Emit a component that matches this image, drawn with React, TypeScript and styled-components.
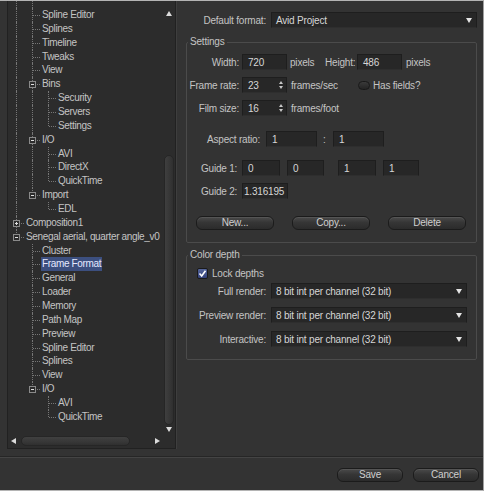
import React from 'react';
import styled, { createGlobalStyle, css } from 'styled-components';

type GuideKind = 'pipe' | 'tee' | 'elbow' | 'blank';
type Toggle = 'minus' | 'plus';

interface TreeNode {
  label: string;
  guides: GuideKind[];
  toggle?: Toggle;
  selected?: boolean;
}

const kinds: Record<string, GuideKind> = { '|': 'pipe', '+': 'tee', L: 'elbow', ' ': 'blank' };

const node = (label: string, pattern: string, toggle?: Toggle, selected?: boolean): TreeNode => ({
  label,
  guides: pattern.split('').map((c) => kinds[c]),
  toggle,
  selected,
});

const treeNodes: TreeNode[] = [
  node('Spline Editor', '|+'),
  node('Splines', '|+'),
  node('Timeline', '|+'),
  node('Tweaks', '|+'),
  node('View', '|+'),
  node('Bins', '|+', 'minus'),
  node('Security', '||+'),
  node('Servers', '||+'),
  node('Settings', '||L'),
  node('I/O', '|+', 'minus'),
  node('AVI', '||+'),
  node('DirectX', '||+'),
  node('QuickTime', '||L'),
  node('Import', '|L', 'minus'),
  node('EDL', '| L'),
  node('Composition1', '+', 'plus'),
  node('Senegal aerial, quarter angle_v0', 'L', 'minus'),
  node('Cluster', ' +'),
  node('Frame Format', ' +', undefined, true),
  node('General', ' +'),
  node('Loader', ' +'),
  node('Memory', ' +'),
  node('Path Map', ' +'),
  node('Preview', ' +'),
  node('Spline Editor', ' +'),
  node('Splines', ' +'),
  node('View', ' +'),
  node('I/O', ' L', 'minus'),
  node('AVI', '  +'),
  node('QuickTime', '  L'),
];

const depthOptions = ['Full render:', 'Preview render:', 'Interactive:'];

const GlobalStyle = createGlobalStyle`
  html, body {
    margin: 0;
    padding: 0;
    background: #333333;
  }
  body {
    font-family: "Liberation Sans", Arial, sans-serif;
    font-size: 10px;
  }
  * {
    box-sizing: border-box;
  }
`;

const Window = styled.div`
  width: 484px;
  height: 491px;
  background: #333333;
  border-top: 1px solid #b4b4b4;
  border-right: 1px solid #a0a0a0;
  border-bottom: 1px solid #b4b4b4;
  display: flex;
  flex-direction: column;
  color: #c6c6c6;
  letter-spacing: -0.2px;
  overflow: hidden;
`;

const Main = styled.div`
  height: 455px;
  flex: none;
  display: flex;
  align-items: flex-start;
`;

/* ---------- tree ---------- */

const TreePanel = styled.div`
  margin-left: 7px;
  width: 169px;
  height: 448px;
  background: #2c2c2c;
  border: 1px solid #212121;
  border-top: none;
  box-shadow: 1px 0 0 #3e3e3e;
  padding: 0 1px 1px 0;
  display: grid;
  grid-template-columns: 1fr 11px;
  grid-template-rows: 1fr 12px;
`;

const TreeList = styled.div`
  overflow: hidden;
  display: flex;
  flex-direction: column;
  letter-spacing: -0.35px;
`;

const Row = styled.div<{ $h?: number }>`
  display: flex;
  height: ${(p) => p.$h ?? 13.86}px;
  flex: none;
  align-items: stretch;
`;

const line = '1px dotted #767676';

const Guide = styled.span<{ $kind: GuideKind }>`
  position: relative;
  flex: 0 0 16px;

  ${(p) =>
    p.$kind !== 'blank' &&
    css`
      &::before {
        content: '';
        position: absolute;
        left: 8px;
        top: 0;
        height: ${p.$kind === 'elbow' ? '50%' : '100%'};
        border-left: ${line};
      }
    `}

  ${(p) =>
    (p.$kind === 'tee' || p.$kind === 'elbow') &&
    css`
      &::after {
        content: '';
        position: absolute;
        left: 9px;
        right: 0;
        top: 50%;
        border-top: ${line};
      }
    `}
`;

const ToggleBox = styled.span<{ $type: Toggle }>`
  position: absolute;
  z-index: 1;
  left: 5px;
  top: 50%;
  margin-top: -3px;
  width: 7px;
  height: 7px;
  background: #2c2c2c;
  border: 1px solid #8a8a8a;

  &::before {
    content: '';
    position: absolute;
    left: 1px;
    top: 2px;
    width: 3px;
    height: 1px;
    background: #e0e0e0;
  }

  ${(p) =>
    p.$type === 'plus' &&
    css`
      &::after {
        content: '';
        position: absolute;
        left: 2px;
        top: 1px;
        width: 1px;
        height: 3px;
        background: #e0e0e0;
      }
    `}
`;

const NodeLabel = styled.span<{ $selected?: boolean }>`
  margin-left: 1px;
  padding: 0 1px;
  white-space: nowrap;
  line-height: 13.86px;
  color: ${(p) => (p.$selected ? '#e4e9ff' : '#c4c4c4')};
  background: ${(p) => (p.$selected ? '#3c4f7f' : 'transparent')};
`;

const VScroll = styled.div`
  display: flex;
  flex-direction: column;
  align-items: center;
`;

const Track = styled.div<{ $dir: 'column' | 'row' }>`
  flex: 1;
  display: flex;
  flex-direction: ${(p) => p.$dir};
  justify-content: flex-end;
  align-items: center;
`;

const VThumb = styled.div`
  width: 10px;
  height: 270px;
  border-radius: 5px;
  border: 1px solid #262626;
  background: linear-gradient(90deg, #3f3f3f, #363636 60%, #2f2f2f);
`;

const HScroll = styled.div`
  display: flex;
  align-items: center;
  padding: 0 3px;
`;

const HThumb = styled.div`
  margin-left: 5px;
  width: 109px;
  height: 10px;
  border-radius: 5px;
  border: 1px solid #262626;
  background: linear-gradient(#404040, #373737 60%, #2f2f2f);
`;

const Arrow = styled.span<{ $dir: 'up' | 'down' | 'left' | 'right'; $mt?: number; $mb?: number }>`
  flex: none;
  width: 0;
  height: 0;
  margin-top: ${(p) => p.$mt ?? 0}px;
  margin-bottom: ${(p) => p.$mb ?? 0}px;
  ${(p) =>
    p.$dir === 'up' || p.$dir === 'down'
      ? css`
          border-left: 3.5px solid transparent;
          border-right: 3.5px solid transparent;
          ${p.$dir === 'up' ? 'border-bottom' : 'border-top'}: 5px solid #dcdcdc;
        `
      : css`
          border-top: 3px solid transparent;
          border-bottom: 3px solid transparent;
          ${p.$dir === 'left' ? 'border-right' : 'border-left'}: 5px solid #dcdcdc;
        `}
`;

const Spacer = styled.div`
  flex: 1;
`;

/* ---------- right pane ---------- */

const RightPane = styled.div`
  flex: 1;
  padding: 11px 6px 0 10px;
  display: flex;
  flex-direction: column;
`;

const FieldRow = styled.div<{ $mt?: number; $pl?: number; $h?: number }>`
  display: flex;
  align-items: center;
  height: ${(p) => p.$h ?? 16}px;
  margin-top: ${(p) => p.$mt ?? 0}px;
  padding-left: ${(p) => p.$pl ?? 0}px;
`;

const Label = styled.span<{ $w?: number; $pr?: number; $align?: 'left' | 'right' }>`
  flex: none;
  width: ${(p) => (p.$w ? `${p.$w}px` : 'auto')};
  padding-right: ${(p) => p.$pr ?? 3}px;
  text-align: ${(p) => p.$align ?? 'right'};
  white-space: nowrap;
  color: #c4c4c4;
`;

const Unit = styled.span<{ $w?: number; $pl?: number }>`
  flex: none;
  width: ${(p) => (p.$w ? `${p.$w}px` : 'auto')};
  padding-left: ${(p) => p.$pl ?? 3}px;
  white-space: nowrap;
  color: #c4c4c4;
`;

const TextBox = styled.div<{ $w: number; $ml?: number; $pl?: number }>`
  flex: none;
  position: relative;
  width: ${(p) => p.$w}px;
  height: 100%;
  margin-left: ${(p) => p.$ml ?? 0}px;
  padding-left: ${(p) => p.$pl ?? 5}px;
  display: flex;
  align-items: center;
  background: #272727;
  border: 1px solid #1e1e1e;
  border-bottom-color: #2e2e2e;
  color: #d6d6d6;
  white-space: nowrap;
  overflow: hidden;
`;

const Spin = styled.span`
  position: absolute;
  right: 3px;
  top: 0;
  bottom: 0;
  display: flex;
  flex-direction: column;
  justify-content: center;
  gap: 2px;
`;

const SpinArrow = styled.span<{ $up?: boolean }>`
  width: 0;
  height: 0;
  border-left: 2.5px solid transparent;
  border-right: 2.5px solid transparent;
  ${(p) => (p.$up ? 'border-bottom' : 'border-top')}: 3px solid #c8c8c8;
`;

const Select = styled.div<{ $w?: number }>`
  flex: ${(p) => (p.$w ? 'none' : '1')};
  width: ${(p) => (p.$w ? `${p.$w}px` : 'auto')};
  height: 100%;
  display: flex;
  align-items: center;
  justify-content: space-between;
  padding: 0 4px 0 4px;
  background: #272727;
  border: 1px solid #1e1e1e;
  border-bottom-color: #2e2e2e;
  color: #d6d6d6;
  white-space: nowrap;
`;

const Caret = styled.span<{ $size?: number }>`
  width: 0;
  height: 0;
  border-left: ${(p) => (p.$size ?? 7) / 2}px solid transparent;
  border-right: ${(p) => (p.$size ?? 7) / 2}px solid transparent;
  border-top: 5px solid #e4e4e4;
`;

const Group = styled.fieldset<{ $mt: number; $pb: number }>`
  margin: ${(p) => p.$mt}px 0 0 0;
  padding: 0 0 ${(p) => p.$pb}px 0;
  border: 1px solid #4b4b4b;
  border-radius: 2px;
  min-inline-size: 0;
`;

const Legend = styled.legend`
  margin-left: 1px;
  padding: 0 2px;
  line-height: 12px;
  color: #c4c4c4;
`;

const ButtonRow = styled.div<{ $mt: number }>`
  display: flex;
  justify-content: space-between;
  height: 14px;
  margin-top: ${(p) => p.$mt}px;
  padding: 0 10px 0 9px;
`;

const PushButton = styled.button<{ $w: number }>`
  width: ${(p) => p.$w}px;
  height: 14px;
  padding: 0;
  font-family: inherit;
  font-size: 10px;
  letter-spacing: -0.2px;
  line-height: 12px;
  color: #cfcfcf;
  border: 1px solid #1b1b1b;
  border-radius: 6px;
  background: linear-gradient(#4a4a4a, #363636 45%, #2b2b2b);
  box-shadow: inset 0 1px 0 #555555;
`;

const Pill = styled.span`
  flex: none;
  width: 12px;
  height: 9px;
  border-radius: 4.5px;
  border: 1px solid #191919;
  background: linear-gradient(#3a3a3a, #242424);
`;

const CheckBox = styled.span`
  flex: none;
  width: 11px;
  height: 11px;
  border-radius: 2px;
  border: 1px solid #1a1a1a;
  background: linear-gradient(#55659a, #34427a);
  display: flex;
  align-items: center;
  justify-content: center;
`;

const Footer = styled.div`
  flex: 1;
  display: flex;
  justify-content: flex-end;
  align-items: flex-start;
  gap: 10px;
  padding: 11px 4px 0 0;
  border-top: 1px solid #262626;
  box-shadow: inset 0 1px 0 #444444;
`;

const TreeRow = ({ item }: { item: TreeNode }) => (
  <Row>
    {item.guides.map((g, i) => (
      <Guide key={i} $kind={g}>
        {item.toggle && i === item.guides.length - 1 && <ToggleBox $type={item.toggle} />}
      </Guide>
    ))}
    <NodeLabel $selected={item.selected}>{item.label}</NodeLabel>
  </Row>
);

const SpinBox = ({ value }: { value: string }) => (
  <TextBox $w={45}>
    {value}
    <Spin>
      <SpinArrow $up />
      <SpinArrow />
    </Spin>
  </TextBox>
);

const App = () => {
  return (
    <>
      <GlobalStyle />
      <Window>
        <Main>
          <TreePanel>
            <TreeList>
              <Row $h={7}>
                <Guide $kind="pipe" />
                <Guide $kind="pipe" />
              </Row>
              {treeNodes.map((item, i) => (
                <TreeRow key={i} item={item} />
              ))}
            </TreeList>
            <VScroll>
              <Arrow $dir="up" $mt={10} />
              <Track $dir="column">
                <VThumb />
              </Track>
              <Arrow $dir="down" $mt={2} $mb={3} />
            </VScroll>
            <HScroll>
              <Arrow $dir="left" />
              <HThumb />
              <Spacer />
              <Arrow $dir="right" />
            </HScroll>
          </TreePanel>

          <RightPane>
            <FieldRow>
              <Label $w={85} $pr={5}>Default format:</Label>
              <Select>
                <span>Avid Project</span>
                <Caret />
              </Select>
            </FieldRow>

            <Group $mt={8} $pb={12}>
              <Legend>Settings</Legend>
              <FieldRow $mt={6}>
                <Label $w={55}>Width:</Label>
                <TextBox $w={45}>720</TextBox>
                <Unit $w={38}>pixels</Unit>
                <Label $w={32}>Height:</Label>
                <TextBox $w={45}>486</TextBox>
                <Unit $pl={4}>pixels</Unit>
              </FieldRow>
              <FieldRow $mt={7}>
                <Label $w={55}>Frame rate:</Label>
                <SpinBox value="23" />
                <Unit $w={71} $pl={4}>frames/sec</Unit>
                <Pill />
                <Unit>Has fields?</Unit>
              </FieldRow>
              <FieldRow $mt={7}>
                <Label $w={55}>Film size:</Label>
                <SpinBox value="16" />
                <Unit $pl={4}>frames/foot</Unit>
              </FieldRow>
              <FieldRow $mt={15}>
                <Label $w={79} $pr={6}>Aspect ratio:</Label>
                <TextBox $w={51}>1</TextBox>
                <Unit $w={16} $pl={6}>:</Unit>
                <TextBox $w={51}>1</TextBox>
              </FieldRow>
              <FieldRow $mt={13} $pl={14}>
                <Label $w={41} $align="left">Guide 1:</Label>
                <TextBox $w={38}>0</TextBox>
                <TextBox $w={37} $ml={7}>0</TextBox>
                <TextBox $w={38} $ml={14}>1</TextBox>
                <TextBox $w={36} $ml={7}>1</TextBox>
              </FieldRow>
              <FieldRow $mt={7} $pl={14}>
                <Label $w={41} $align="left">Guide 2:</Label>
                <TextBox $w={46} $pl={1}>1.316195</TextBox>
              </FieldRow>
              <ButtonRow $mt={17}>
                <PushButton $w={78}>New...</PushButton>
                <PushButton $w={78}>Copy...</PushButton>
                <PushButton $w={78}>Delete</PushButton>
              </ButtonRow>
            </Group>

            <Group $mt={6} $pb={12}>
              <Legend>Color depth</Legend>
              <FieldRow $mt={5} $pl={10} $h={14}>
                <CheckBox>
                  <svg width="9" height="9" viewBox="0 0 9 9">
                    <polyline points="1.5,4.5 3.7,7 7.5,1.8" fill="none" stroke="#ffffff" strokeWidth="1.6" />
                  </svg>
                </CheckBox>
                <Unit $pl={4}>Lock depths</Unit>
              </FieldRow>
              {depthOptions.map((name, i) => (
                <FieldRow key={name} $mt={i === 0 ? 3 : 8}>
                  <Label $w={84} $pr={5}>{name}</Label>
                  <Select $w={196}>
                    <span>8 bit int per channel (32 bit)</span>
                    <Caret $size={6} />
                  </Select>
                </FieldRow>
              ))}
            </Group>
          </RightPane>
        </Main>

        <Footer>
          <PushButton $w={66}>Save</PushButton>
          <PushButton $w={66}>Cancel</PushButton>
        </Footer>
      </Window>
    </>
  );
};

export default App;
